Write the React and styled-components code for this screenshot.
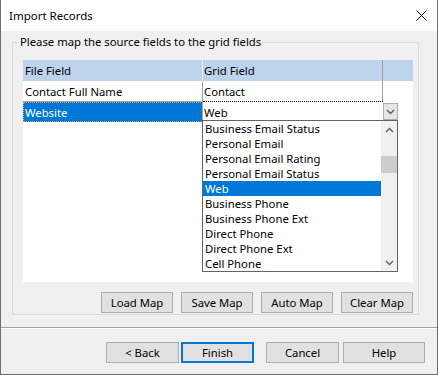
import React from 'react';
import styled, { createGlobalStyle } from 'styled-components';

const GlobalStyle = createGlobalStyle`
  html, body { margin: 0; padding: 0; background: #ffffff; }
  body { font-family: "Noto Sans", "Open Sans", sans-serif; font-size: 11.3px; color: #000; }
  * { box-sizing: border-box; }
`;

const Window = styled.div`
  width: 438px;
  height: 375px;
  display: flex;
  flex-direction: column;
  border: 1px solid #6f6f6f;
  border-top: none;
  background: #f0f0f0;
`;

const TitleBar = styled.div`
  height: 31px;
  flex: none;
  background: #ffffff;
  display: flex;
  align-items: center;
  justify-content: space-between;
  padding: 0 10px 0 8px;
  font-size: 11.5px;
`;

const Body = styled.div`
  flex: 1;
  display: flex;
  flex-direction: column;
  padding: 11px 18px 0 11px;
`;

const GroupBox = styled.div`
  position: relative;
  border: 1px solid #dcdcdc;
  padding: 17px 5px 1px 10px;
  display: flex;
  flex-direction: column;
`;

const Legend = styled.span`
  position: absolute;
  left: 6px;
  top: -9px;
  padding: 0 1px;
  line-height: 15px;
  background: #f0f0f0;
`;

const Grid = styled.div`
  position: relative;
  height: 222px;
  background: #ffffff;
  display: flex;
  flex-direction: column;
`;

const Row = styled.div`
  display: flex;
  height: ${p => p.$h}px;
  background: ${p => p.$header ? '#bdd3ec' : 'transparent'};
`;

const Cell = styled.div`
  width: ${p => p.$w ? `${p.$w}px` : 'auto'};
  flex: ${p => p.$w ? 'none' : '1'};
  display: flex;
  align-items: center;
  padding-left: ${p => p.$pl ?? 2}px;
  white-space: nowrap;
  border-right: ${p => p.$divider ? `1px solid ${p.$divider}` : 'none'};
  border-bottom: ${p => p.$line ? '1px solid #a0a0a0' : 'none'};
  background: ${p => p.$selected ? '#0078d7' : 'transparent'};
  color: ${p => p.$selected ? '#ffffff' : '#000000'};
  outline: ${p => p.$selected ? '1px dotted #e0a060' : 'none'};
  outline-offset: -1px;
`;

const EditCell = styled.div`
  width: 180px;
  flex: none;
  display: flex;
  align-items: center;
  padding-left: 1px;
  margin-top: -1px;
  border-top: 1px dotted #000000;
  background: #ffffff;
`;

const DropButton = styled.div`
  position: absolute;
  left: 360px;
  top: 43px;
  width: 15px;
  height: 17px;
  background: #e5e5e5;
  border: 1px solid #adadad;
  display: flex;
  align-items: center;
  justify-content: center;
`;

const DropList = styled.div`
  position: absolute;
  left: 179px;
  top: 60px;
  width: 196px;
  height: 152px;
  border: 1px solid #646464;
  background: #ffffff;
  display: flex;
`;

const Items = styled.div`
  flex: 1;
  display: flex;
  flex-direction: column;
`;

const Item = styled.div`
  height: 15px;
  line-height: 15px;
  padding-left: 2px;
  white-space: nowrap;
  background: ${p => p.$selected ? '#0078d7' : 'transparent'};
  color: ${p => p.$selected ? '#ffffff' : '#000000'};
`;

const ScrollBar = styled.div`
  width: 16px;
  flex: none;
  background: #f0f0f0;
  display: flex;
  flex-direction: column;
`;

const ScrollArrow = styled.div`
  height: 17px;
  flex: none;
  display: flex;
  align-items: center;
  justify-content: center;
`;

const Track = styled.div`
  flex: 1;
  padding-top: 18px;
`;

const Thumb = styled.div`
  height: 17px;
  background: #cdcdcd;
`;

const ButtonRow = styled.div`
  display: flex;
  justify-content: flex-end;
  gap: ${p => p.$gap}px;
  margin-top: 10px;
`;

const Button = styled.button`
  width: ${p => p.$w}px;
  height: 21px;
  margin-left: ${p => p.$ml || 0}px;
  padding: 0;
  background: #e1e1e1;
  border: ${p => p.$default ? '2px solid #0078d7' : '1px solid #adadad'};
  font-family: inherit;
  font-size: 11.3px;
  color: #000;
`;

const Separator = styled.div`
  margin: 12px -18px 0 -11px;
  border-top: 1px solid #a0a0a0;
  border-bottom: 1px solid #ffffff;
`;

const Footer = styled.div`
  display: flex;
  justify-content: flex-end;
  margin: 13px -6px 0 0;
`;

const Chevron = ({ up }) => (
  <svg width="9" height="6" viewBox="0 0 9 6">
    <polyline
      points={up ? '1,5 4.5,1.5 8,5' : '1,1 4.5,4.5 8,1'}
      fill="none"
      stroke="#606060"
      strokeWidth="1.4"
    />
  </svg>
);

const CloseIcon = () => (
  <svg width="11" height="11" viewBox="0 0 11 11">
    <path d="M0.5 0.5 L10.5 10.5 M10.5 0.5 L0.5 10.5" stroke="#000" strokeWidth="1" />
  </svg>
);

const listItems = [
  'Business Email Status',
  'Personal Email',
  'Personal Email Rating',
  'Personal Email Status',
  'Web',
  'Business Phone',
  'Business Phone Ext',
  'Direct Phone',
  'Direct Phone Ext',
  'Cell Phone',
];

export default function App() {
  return (
    <>
      <GlobalStyle />
      <Window>
        <TitleBar>
          <span>Import Records</span>
          <CloseIcon />
        </TitleBar>
        <Body>
          <GroupBox>
            <Legend>Please map the source fields to the grid fields</Legend>
            <Grid>
              <Row $h={21} $header>
                <Cell $w={180} $divider="#e6edf6">File Field</Cell>
                <Cell $w={180} $divider="#a0a0a0" $pl={1}>Grid Field</Cell>
                <Cell />
              </Row>
              <Row $h={21}>
                <Cell $w={180} $divider="#a0a0a0" $line>Contact Full Name</Cell>
                <Cell $w={180} $divider="#a0a0a0" $line $pl={1}>Contact</Cell>
                <Cell />
              </Row>
              <Row $h={20}>
                <Cell $w={180} $divider="#a0a0a0" $selected>Website</Cell>
                <EditCell>Web</EditCell>
              </Row>
              <DropButton>
                <Chevron />
              </DropButton>
              <DropList>
                <Items>
                  {listItems.map(t => (
                    <Item key={t} $selected={t === 'Web'}>{t}</Item>
                  ))}
                </Items>
                <ScrollBar>
                  <ScrollArrow><Chevron up /></ScrollArrow>
                  <Track><Thumb /></Track>
                  <ScrollArrow><Chevron /></ScrollArrow>
                </ScrollBar>
              </DropList>
            </Grid>
            <ButtonRow $gap={8}>
              <Button $w={72}>Load Map</Button>
              <Button $w={72}>Save Map</Button>
              <Button $w={72}>Auto Map</Button>
              <Button $w={72}>Clear Map</Button>
            </ButtonRow>
          </GroupBox>
          <Separator />
          <Footer>
            <Button $w={73}>&lt; Back</Button>
            <Button $w={73} $ml={2} $default>Finish</Button>
            <Button $w={73} $ml={12}>Cancel</Button>
            <Button $w={82} $ml={4}>Help</Button>
          </Footer>
        </Body>
      </Window>
    </>
  );
}
